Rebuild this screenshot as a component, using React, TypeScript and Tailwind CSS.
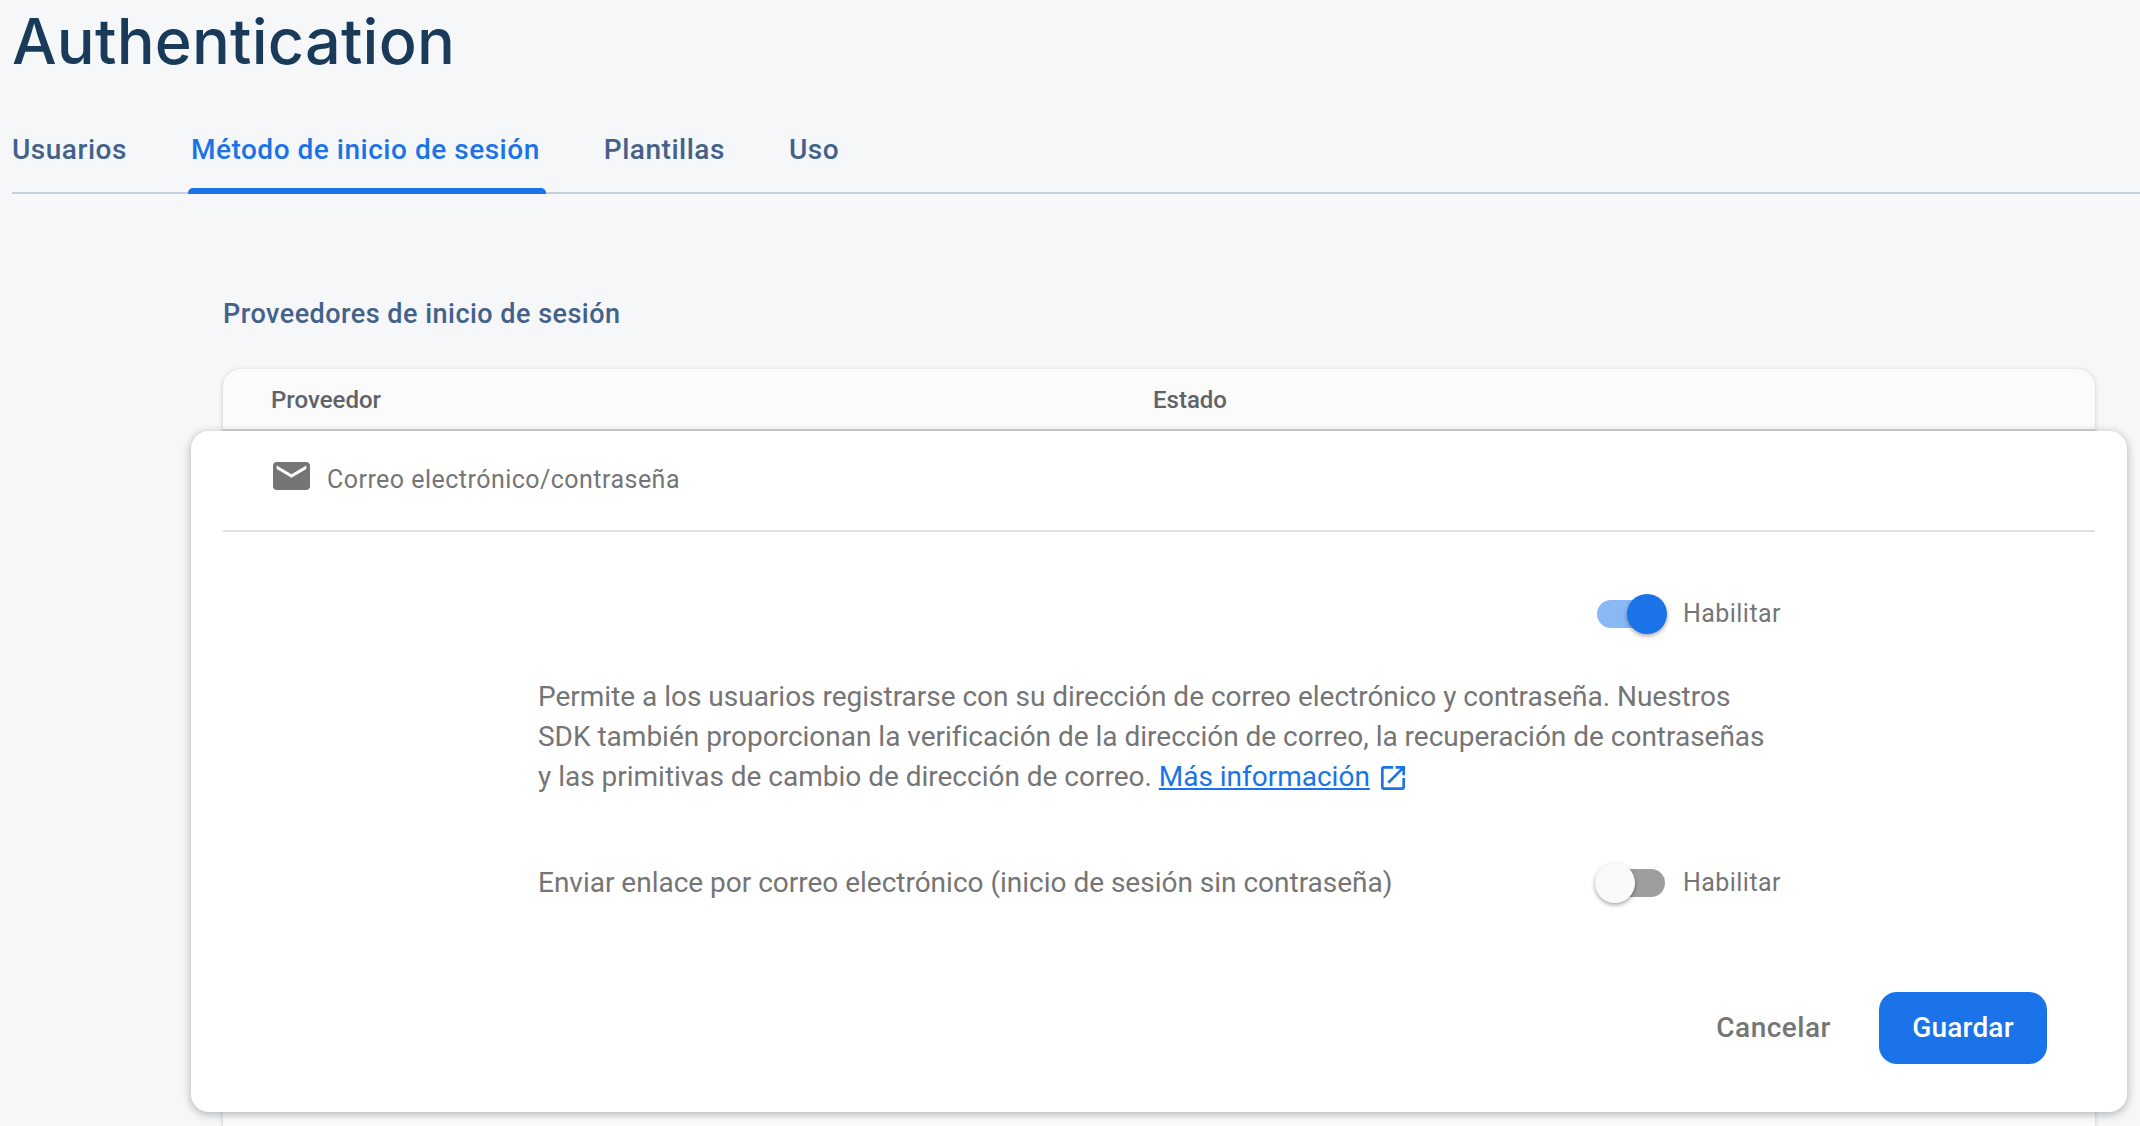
import React from 'react';

const tabs = [
    { label: 'Usuarios', active: false },
    { label: 'Método de inicio de sesión', active: true },
    { label: 'Plantillas', active: false },
    { label: 'Uso', active: false },
];

const Toggle = ({ on }: { on: boolean }) => (
    <div className="flex items-center gap-[18px] text-[25px] leading-[40px] tracking-[0.45px] text-[#757575]">
        <div className={`flex h-[28px] w-[68px] items-center rounded-full ${on ? 'justify-end bg-[#8ab8f4]' : 'justify-start bg-[#9e9e9e]'}`}>
            <div className={`h-[40px] w-[40px] rounded-full ${on ? '-mr-[2px] bg-[#1a73e8]' : '-ml-[2px] bg-[#fafafa]'} shadow-[0_2px_4px_rgba(0,0,0,0.35)]`} />
        </div>
        <span>Habilitar</span>
    </div>
);

export default function App() {
    return (
        <div className="h-[1126px] w-[2140px] overflow-hidden bg-[#f6f7f9] font-['Roboto',sans-serif]">
            {/* Header */}
            <h1 className="pl-[12px] pt-[3px] font-['Inter',sans-serif] text-[63px] font-medium leading-[76px] tracking-[0.2px] text-[#1a3a5a]">
                Authentication
            </h1>

            {/* Tabs */}
            <div className="ml-[12px] mt-[32px] flex h-[83px] gap-[64px] border-b-2 border-[#c5cfe0]">
                {tabs.map((tab) => (
                    <div key={tab.label} className="relative pt-[21px] text-[28px] font-medium leading-[36px] tracking-[0.52px]">
                        <span className={tab.active ? 'text-[#1a73e8]' : 'text-[#44618a]'}>{tab.label}</span>
                        {tab.active && (
                            <div className="absolute -left-[3px] -right-[6px] -bottom-[2px] h-[6px] rounded-t-[5px] bg-[#1a73e8]" />
                        )}
                    </div>
                ))}
            </div>

            {/* Providers */}
            <div className="ml-[223px] w-[1872px]">
                <h2 className="mt-[102px] text-[27px] font-medium leading-[36px] tracking-[0.48px] text-[#44618a]">
                    Proveedores de inicio de sesión
                </h2>

                <div className="mt-[37px] min-h-[900px] rounded-t-[18px] bg-[#fbfbfb] shadow-[0_1px_5px_rgba(0,0,0,0.18)]">
                    <div className="flex h-[62px] items-center border-b-2 border-[#d4d4d4] pt-[2px] text-[24px] font-medium text-[#5f6368]">
                        <div className="ml-[48px] w-[882px]">Proveedor</div>
                        <div>Estado</div>
                    </div>

                    {/* Expanded row */}
                    <div className="relative -mx-[32px] h-[681px] rounded-[18px] bg-white px-[32px] shadow-[0_2px_10px_rgba(0,0,0,0.3)]">
                        <div className="flex h-[101px] items-center border-b-2 border-[#e0e0e0] pb-[7px] pl-[50px]">
                            <svg viewBox="2 4 20 16" preserveAspectRatio="none" className="-mt-[2px] h-[28px] w-[37px] fill-[#757575]">
                                <path d="M20 4H4c-1.1 0-1.99.9-1.99 2L2 18c0 1.1.9 2 2 2h16c1.1 0 2-.9 2-2V6c0-1.1-.9-2-2-2zm0 4l-8 5-8-5V6l8 5 8-5v2z" />
                            </svg>
                            <span className="ml-[17px] mt-[6px] text-[25px] tracking-[0.47px] text-[#757575]">Correo electrónico/contraseña</span>
                        </div>

                        <div className="ml-[315px] w-[1243px] text-[28px] leading-[40px] tracking-[-0.01px] text-[#757575]">
                            <div className="mt-[62px] flex justify-end">
                                <Toggle on />
                            </div>
                            <p className="mt-[43px]">
                                Permite a los usuarios registrarse con su dirección de correo electrónico y contraseña. Nuestros
                                <br />
                                SDK también proporcionan la verificación de la dirección de correo, la recuperación de contraseñas
                                <br />
                                y las primitivas de cambio de dirección de correo.{' '}
                                <a className="text-[#1a73e8] underline">Más información</a>
                                <svg viewBox="3 3 18 18" className="ml-[11px] inline-block h-[24px] w-[24px] fill-[#1a73e8] align-[-4px]">
                                    <path d="M19 19H5V5h7V3H5c-1.11 0-2 .9-2 2v14c0 1.1.89 2 2 2h14c1.1 0 2-.9 2-2v-7h-2v7zM14 3v2h3.59l-9.83 9.83 1.41 1.41L19 6.41V10h2V3h-7z" />
                                </svg>
                            </p>
                            <div className="mt-[66px] flex items-center justify-between">
                                <span>Enviar enlace por correo electrónico (inicio de sesión sin contraseña)</span>
                                <Toggle on={false} />
                            </div>
                        </div>

                        <div className="mt-[89px] flex items-center justify-end gap-[48px] pr-[48px]">
                            <button className="text-[28px] font-medium tracking-[0.5px] text-[#757575]">Cancelar</button>
                            <button className="h-[72px] w-[168px] rounded-[18px] bg-[#1a73e8] text-[28px] font-medium tracking-[0.2px] text-white">
                                Guardar
                            </button>
                        </div>
                    </div>
                </div>
            </div>
        </div>
    );
}
